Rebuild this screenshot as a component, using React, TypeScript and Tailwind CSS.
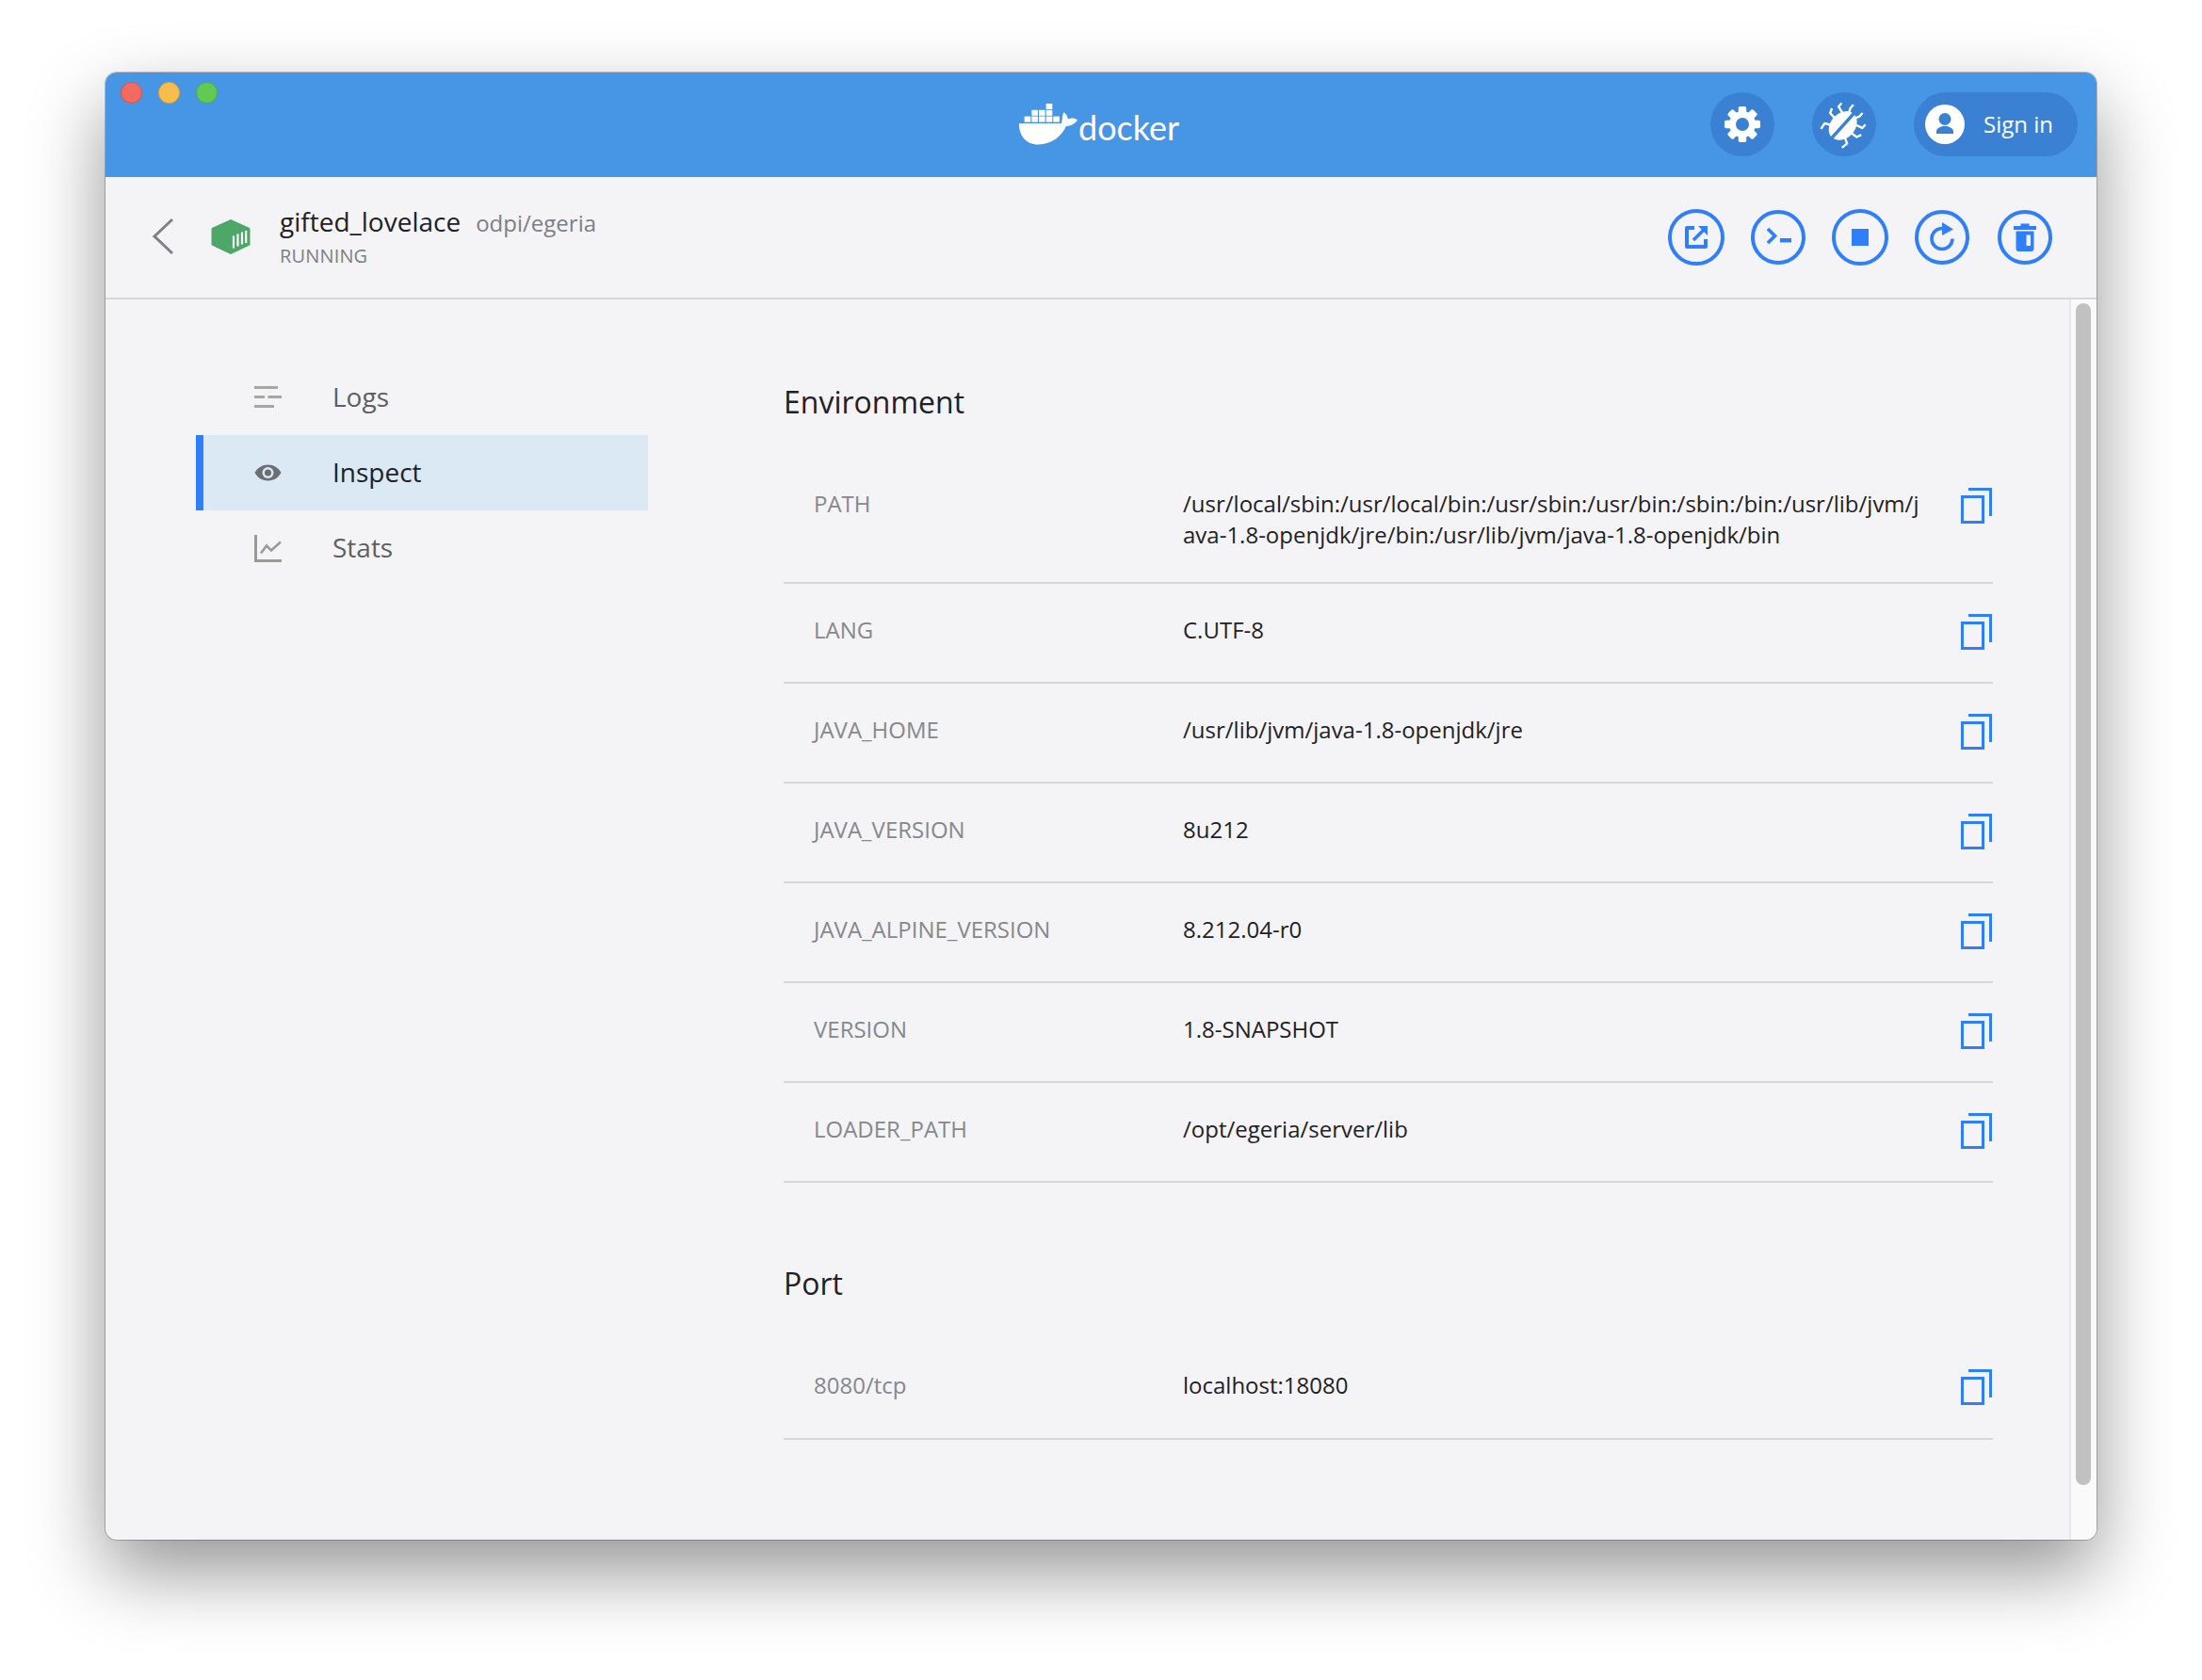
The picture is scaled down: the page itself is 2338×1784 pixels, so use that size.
import React from "react";

const FONT = "font-['Open_Sans',sans-serif]";
const BLUE = "#2f7ffa";

function Copy() {
  return (
    <svg width="33" height="38" viewBox="0 0 33 38" className="block shrink-0" fill="none" stroke={BLUE} strokeWidth="3">
      <rect x="1.5" y="9.5" width="22" height="27" />
      <path d="M8 1.5h23.5V30" />
    </svg>
  );
}

function Row({ k, v, tall, port }: { k: string; v: React.ReactNode; tall?: boolean; port?: boolean }) {
  const box = tall ? "h-[125px] pt-[23px]" : port ? "h-[112px] items-center" : "h-[106px] items-center";
  const text = tall ? "" : port ? "mb-[4px]" : "mb-[7px]";
  return (
    <div className={`flex border-b-2 border-[#d6d7d9] ${box}`}>
      <div className={`w-[424px] pl-[32px] text-[24px] leading-[33px] text-[#85888c] shrink-0 ${text}`}>{k}</div>
      <div className={`w-[790px] text-[24px] leading-[33px] text-[#1f2124] break-all ${text}`}>{v}</div>
      <div className={`ml-auto mr-[1px] ${port ? "mt-[1px]" : "mb-[3px]"}`}><Copy /></div>
    </div>
  );
}

function Circle({ d, children, extra }: { d: number; children: React.ReactNode; extra?: string }) {
  return (
    <div
      className={`rounded-full border-[4px] border-[#2f7ffa] flex items-center justify-center shrink-0 ${extra ?? ""}`}
      style={{ width: d, height: d }}
    >
      {children}
    </div>
  );
}

function Nav({ label, active, icon }: { label: string; active?: boolean; icon: React.ReactNode }) {
  return (
    <div className={`h-[80px] flex items-center border-l-[8px] text-[28px] ${active ? "bg-[#dbe9f5] border-[#2f7ffa] text-[#1f2124]" : "border-transparent text-[#5c5f63]"}`}>
      <div className="w-[138px] pl-[54px]">{icon}</div>
      <span className="mb-[3px] ml-[-1px]">{label}</span>
    </div>
  );
}

function Gear() {
  return (
    <svg width="40" height="40" viewBox="-20 -20 40 40" className="block">
      {[0, 45, 90, 135, 180, 225, 270, 315].map((a) => (
        <rect key={a} x="-4.2" y="-19" width="8.4" height="10" rx="1.8" fill="#fff" transform={`rotate(${a})`} />
      ))}
      <circle r="14" fill="#fff" />
      <circle r="7" fill="#3a81d4" />
    </svg>
  );
}

function Bug() {
  return (
    <svg width="52" height="52" viewBox="-26 -26 52 52" className="block">
      <g transform="rotate(42)">
        <g fill="none" stroke="#fff" strokeWidth="2.4" strokeLinejoin="round">
          <path d="M-10 -8L-17 -10L-17 -15" />
          <path d="M-11 2L-19 1L-21 -4" />
          <path d="M-10 10L-16 13L-15 20" />
          <path d="M10 -8L17 -10L17 -15" />
          <path d="M11 2L19 1L21 -4" />
          <path d="M10 10L16 13L15 20" />
          <path d="M-4 -12L-6.5 -17L-6.5 -22" />
          <path d="M4 -12L6.5 -17L6.5 -22" />
        </g>
        <ellipse cx="0" cy="2" rx="13" ry="17" fill="#fff" />
        <rect x="-1.8" y="-22" width="3.6" height="44" fill="#3a81d4" />
      </g>
    </svg>
  );
}

export default function App() {
  const rows: [string, string][] = [
    ["LANG", "C.UTF-8"],
    ["JAVA_HOME", "/usr/lib/jvm/java-1.8-openjdk/jre"],
    ["JAVA_VERSION", "8u212"],
    ["JAVA_ALPINE_VERSION", "8.212.04-r0"],
    ["VERSION", "1.8-SNAPSHOT"],
    ["LOADER_PATH", "/opt/egeria/server/lib"],
  ];
  return (
    <div className={`${FONT} bg-white w-[2338px] h-[1784px] pt-[77px] pl-[112px] overflow-hidden`}>
      <div className="w-[2114px] h-[1558px] rounded-[12px] overflow-hidden bg-[#f4f4f7] shadow-[0_0_0_1px_rgba(0,0,0,0.22),0_34px_80px_0_rgba(0,0,0,0.42)] flex flex-col">
        <header className="h-[111px] bg-[#4795e5] shrink-0 flex items-start">
          <div className="flex gap-[17px] pl-[16px] pt-[10px] shrink-0">
            <div className="w-[23px] h-[23px] rounded-full bg-[#f26a60] border border-[#d9534b]" />
            <div className="w-[23px] h-[23px] rounded-full bg-[#f9bd4b] border border-[#dfa437]" />
            <div className="w-[23px] h-[23px] rounded-full bg-[#62c955] border border-[#4cad42]" />
          </div>
          <div className="ml-[851px] mt-[33px] flex items-end">
            <svg width="62" height="44" viewBox="0 0 62 44" fill="#fff" className="block">
              <path d="M0 21H45C46 18 45.5 13 47.5 9C50 11 51.5 14 52 16.5C55 15 59 15 62 17.5C59 22 54 24 50 24C45 35 35 43 20 43.5C8 43.5 0 35 0 21Z" />
              {[[5.7, 13.6], [13.4, 13.6], [21, 13.6], [28.7, 13.6], [36.3, 13.6], [13.4, 6.8], [21, 6.8], [28.7, 6.8], [28.7, 0]].map(([x, y], i) => (
                <rect key={i} x={x} y={y} width="6.6" height="6" />
              ))}
            </svg>
            <span className="font-['Lato',sans-serif] text-[36px] leading-[40px] text-white ml-[1px] mb-[-1px]">docker</span>
          </div>
          <div className="ml-auto flex items-center gap-[40px] pt-[21px] pr-[20px]">
            <div className="w-[68px] h-[68px] rounded-full bg-[#3a81d4] flex items-center justify-center"><Gear /></div>
            <div className="w-[68px] h-[68px] rounded-full bg-[#3a81d4] flex items-center justify-center"><Bug /></div>
            <div className="w-[174px] h-[68px] rounded-full bg-[#3a81d4] flex items-center pl-[12px] gap-[20px] text-white text-[24px]">
              <svg width="42" height="42" viewBox="0 0 42 42" className="block">
                <circle cx="21" cy="21" r="21" fill="#fff" />
                <circle cx="21" cy="15.5" r="6.5" fill="#3a81d4" />
                <path d="M12 31v-2.5c0-3.6 5-5.5 9-5.5s9 1.9 9 5.5V31z" fill="#3a81d4" />
              </svg>
              <span>Sign in</span>
            </div>
          </div>
        </header>

        <div className="h-[130px] shrink-0 border-b-2 border-[#d6d7d9] flex items-center pl-[49px] pr-[47px]">
          <svg width="24" height="40" viewBox="0 0 24 40" fill="none" stroke="#7d8186" strokeWidth="3" className="block mb-[3px] shrink-0">
            <path d="M22 2L3 20L22 38" />
          </svg>
          <svg width="42" height="37" viewBox="0 0 42 37" className="block ml-[39px] mb-[2px] shrink-0">
            <path d="M21 0.5L41 9.5V27L21 36.5L1 27V9.5Z" fill="#4ca768" stroke="#4ca768" strokeWidth="1" strokeLinejoin="round" />
            <path d="M24 17.5v13M28.5 15.5v13M33 13.5v13M37.2 12v13" stroke="#fff" strokeWidth="2.2" />
          </svg>
          <div className="ml-[31px] mb-[3px]">
            <div className="flex items-baseline">
              <span className="text-[28px] leading-[38px] text-[#1f2124]">gifted_lovelace</span>
              <span className="text-[24px] ml-[16px] text-[#7c7f84]">odpi/egeria</span>
            </div>
            <div className="text-[20px] leading-[28px] mt-[3px] text-[#7c7f84] tracking-[0.15px]">RUNNING</div>
          </div>
          <div className="ml-auto flex items-center gap-[28px]">
            <Circle d={60}>
              <svg width="26" height="26" viewBox="0 0 26 26" className="block">
                <path d="M11 3H3V23H23V15" fill="none" stroke={BLUE} strokeWidth="4" strokeLinejoin="round" />
                <path d="M10 16L21 5" fill="none" stroke={BLUE} strokeWidth="3.5" />
                <path d="M15 1H25V11Z" fill={BLUE} />
              </svg>
            </Circle>
            <Circle d={58}>
              <svg width="30" height="30" viewBox="0 0 30 30" className="block">
                <path d="M4 6L11.5 13.6L4 21" fill="none" stroke={BLUE} strokeWidth="3.6" />
                <rect x="17" y="16" width="12" height="4.4" fill={BLUE} />
              </svg>
            </Circle>
            <Circle d={60}>
              <div className="w-[18px] h-[18px] bg-[#2f7ffa]" />
            </Circle>
            <Circle d={58}>
              <svg width="36" height="36" viewBox="0 0 36 36" className="block">
                <path d="M18 8.5A11 11 0 1 0 29 19.5" fill="none" stroke={BLUE} strokeWidth="3.6" />
                <path d="M18 2L30 9.5L18 16Z" fill={BLUE} />
              </svg>
            </Circle>
            <Circle d={58} extra="ml-[2px]">
              <svg width="30" height="32" viewBox="0 0 30 32" className="block">
                <path d="M10.5 1.5h9v3h-9z M3 4h24v4H3z" fill={BLUE} />
                <path d="M5.5 9.5H24.5V28a3 3 0 0 1-3 3H8.5a3 3 0 0 1-3-3Z M16.5 13.5V25H21V13.5Z" fill={BLUE} fillRule="evenodd" />
              </svg>
            </Circle>
          </div>
        </div>

        <div className="flex-1 flex min-h-0">
          <nav className="w-[480px] ml-[96px] pt-[64px] shrink-0">
            <Nav
              label="Logs"
              icon={
                <svg width="30" height="24" viewBox="0 0 30 24" fill="#a6a6a6" className="block">
                  <rect x="0" y="0" width="25" height="3" />
                  <rect x="0" y="10" width="11" height="3" />
                  <rect x="14.5" y="10" width="14.5" height="3" />
                  <rect x="0" y="20" width="21" height="3" />
                </svg>
              }
            />
            <Nav
              active
              label="Inspect"
              icon={
                <svg width="29" height="18" viewBox="0 0 29 18" className="block">
                  <path d="M0.5 9C3.5 3.5 8.5 0.5 14.5 0.5S25.5 3.5 28.5 9C25.5 14.5 20.5 17.5 14.5 17.5S3.5 14.5 0.5 9Z" fill="#6b6f73" />
                  <circle cx="14.5" cy="9" r="6" fill="#dbe9f5" />
                  <circle cx="14.5" cy="9" r="3.5" fill="#6b6f73" />
                </svg>
              }
            />
            <Nav
              label="Stats"
              icon={
                <svg width="30" height="29" viewBox="0 0 30 29" fill="none" stroke="#9a9a9a" strokeWidth="3" className="block">
                  <path d="M1.5 0V27.5H29" />
                  <path d="M7 19.5L13 11.5L18 16.5L28 7.5" strokeWidth="2.6" />
                </svg>
              }
            />
          </nav>

          <main className="w-[1284px] ml-[144px] pt-[87px] shrink-0">
            <h2 className="text-[32px] leading-[44px] font-normal text-[#1f2124] mb-[46px]">Environment</h2>
            <Row
              tall
              k="PATH"
              v="/usr/local/sbin:/usr/local/bin:/usr/sbin:/usr/bin:/sbin:/bin:/usr/lib/jvm/java-1.8-openjdk/jre/bin:/usr/lib/jvm/java-1.8-openjdk/bin"
            />
            {rows.map(([k, v]) => (
              <Row key={k} k={k} v={v} />
            ))}
            <h2 className="text-[32px] leading-[44px] font-normal text-[#1f2124] mt-[85px] mb-[32px]">Port</h2>
            <Row port k="8080/tcp" v="localhost:18080" />
          </main>

          <div className="ml-auto w-[29px] shrink-0 bg-[#fafafa] border-l-2 border-[#e8e8ea] pl-[5px] pt-[4px]">
            <div className="w-[16px] h-[1255px] rounded-full bg-[#c1c1c1]" />
          </div>
        </div>
      </div>
    </div>
  );
}
